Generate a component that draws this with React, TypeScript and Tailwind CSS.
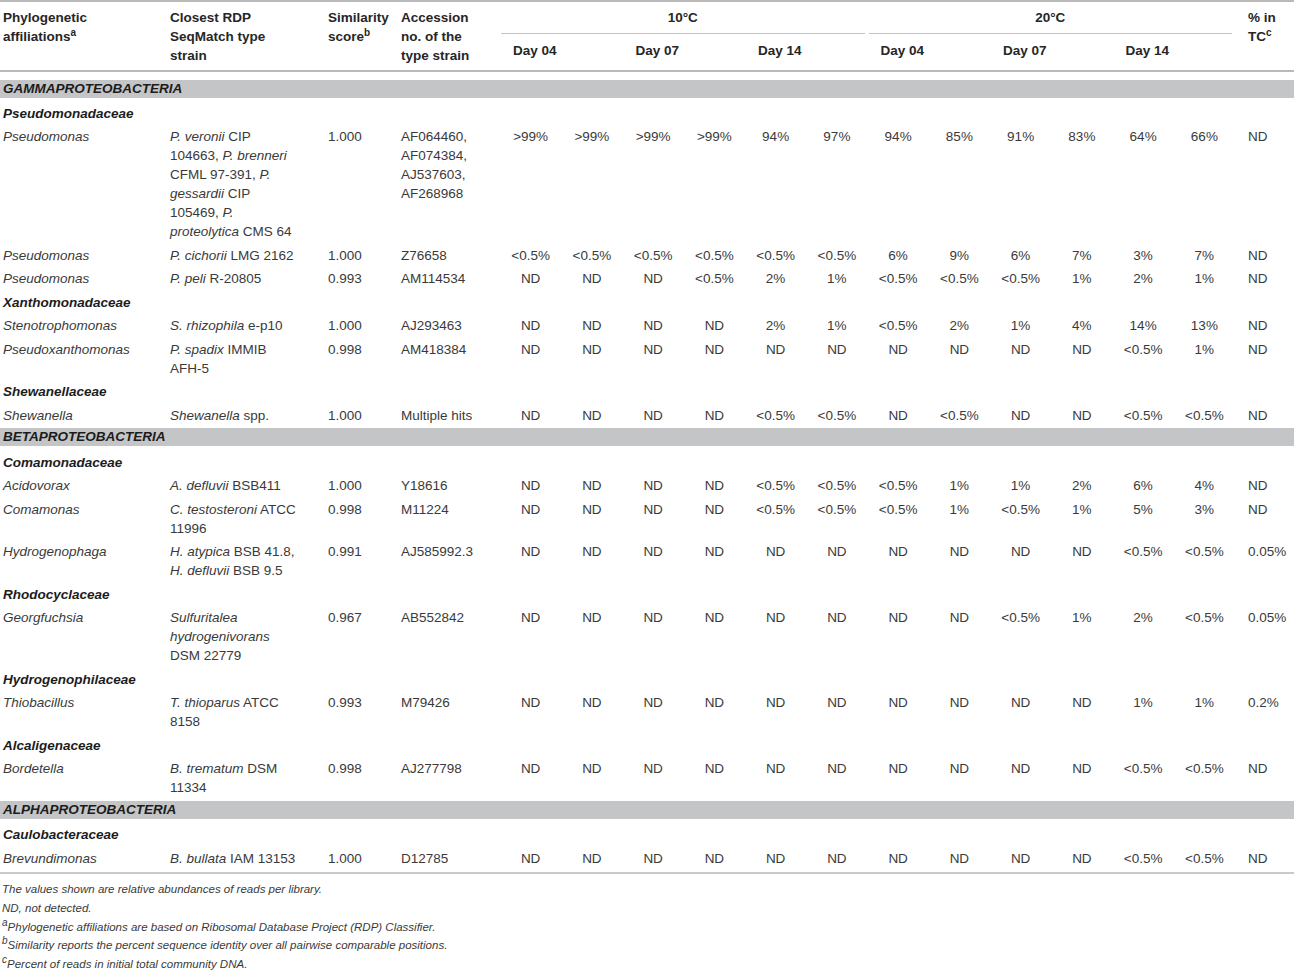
import type { ReactNode } from 'react';

const grid = 'grid grid-cols-[167px_158px_73px_102px_repeat(12,61.25px)_1fr]';

type Row = {
  genus: string;
  strain: ReactNode;
  score: string;
  acc: ReactNode;
  vals: string[];
  tc: string;
};

type Item =
  | { kind: 'band'; label: string; first?: boolean }
  | { kind: 'family'; label: string }
  | ({ kind: 'row' } & Row);

const ND6 = ['ND', 'ND', 'ND', 'ND', 'ND', 'ND'];

const items: Item[] = [
  { kind: 'band', label: 'GAMMAPROTEOBACTERIA', first: true },
  { kind: 'family', label: 'Pseudomonadaceae' },
  {
    kind: 'row',
    genus: 'Pseudomonas',
    strain: (
      <>
        <i>P. veronii</i> CIP
        <br />
        104663, <i>P. brenneri</i>
        <br />
        CFML 97-391, <i>P.</i>
        <br />
        <i>gessardii</i> CIP
        <br />
        105469, <i>P.</i>
        <br />
        <i>proteolytica</i> CMS 64
      </>
    ),
    score: '1.000',
    acc: (
      <>
        AF064460,
        <br />
        AF074384,
        <br />
        AJ537603,
        <br />
        AF268968
      </>
    ),
    vals: ['>99%', '>99%', '>99%', '>99%', '94%', '97%', '94%', '85%', '91%', '83%', '64%', '66%'],
    tc: 'ND',
  },
  {
    kind: 'row',
    genus: 'Pseudomonas',
    strain: (
      <>
        <i>P. cichorii</i> LMG 2162
      </>
    ),
    score: '1.000',
    acc: 'Z76658',
    vals: ['<0.5%', '<0.5%', '<0.5%', '<0.5%', '<0.5%', '<0.5%', '6%', '9%', '6%', '7%', '3%', '7%'],
    tc: 'ND',
  },
  {
    kind: 'row',
    genus: 'Pseudomonas',
    strain: (
      <>
        <i>P. peli</i> R-20805
      </>
    ),
    score: '0.993',
    acc: 'AM114534',
    vals: ['ND', 'ND', 'ND', '<0.5%', '2%', '1%', '<0.5%', '<0.5%', '<0.5%', '1%', '2%', '1%'],
    tc: 'ND',
  },
  { kind: 'family', label: 'Xanthomonadaceae' },
  {
    kind: 'row',
    genus: 'Stenotrophomonas',
    strain: (
      <>
        <i>S. rhizophila</i> e-p10
      </>
    ),
    score: '1.000',
    acc: 'AJ293463',
    vals: ['ND', 'ND', 'ND', 'ND', '2%', '1%', '<0.5%', '2%', '1%', '4%', '14%', '13%'],
    tc: 'ND',
  },
  {
    kind: 'row',
    genus: 'Pseudoxanthomonas',
    strain: (
      <>
        <i>P. spadix</i> IMMIB
        <br />
        AFH-5
      </>
    ),
    score: '0.998',
    acc: 'AM418384',
    vals: [...ND6, 'ND', 'ND', 'ND', 'ND', '<0.5%', '1%'],
    tc: 'ND',
  },
  { kind: 'family', label: 'Shewanellaceae' },
  {
    kind: 'row',
    genus: 'Shewanella',
    strain: (
      <>
        <i>Shewanella</i> spp.
      </>
    ),
    score: '1.000',
    acc: 'Multiple hits',
    vals: ['ND', 'ND', 'ND', 'ND', '<0.5%', '<0.5%', 'ND', '<0.5%', 'ND', 'ND', '<0.5%', '<0.5%'],
    tc: 'ND',
  },
  { kind: 'band', label: 'BETAPROTEOBACTERIA' },
  { kind: 'family', label: 'Comamonadaceae' },
  {
    kind: 'row',
    genus: 'Acidovorax',
    strain: (
      <>
        <i>A. defluvii</i> BSB411
      </>
    ),
    score: '1.000',
    acc: 'Y18616',
    vals: ['ND', 'ND', 'ND', 'ND', '<0.5%', '<0.5%', '<0.5%', '1%', '1%', '2%', '6%', '4%'],
    tc: 'ND',
  },
  {
    kind: 'row',
    genus: 'Comamonas',
    strain: (
      <>
        <i>C. testosteroni</i> ATCC
        <br />
        11996
      </>
    ),
    score: '0.998',
    acc: 'M11224',
    vals: ['ND', 'ND', 'ND', 'ND', '<0.5%', '<0.5%', '<0.5%', '1%', '<0.5%', '1%', '5%', '3%'],
    tc: 'ND',
  },
  {
    kind: 'row',
    genus: 'Hydrogenophaga',
    strain: (
      <>
        <i>H. atypica</i> BSB 41.8,
        <br />
        <i>H. defluvii</i> BSB 9.5
      </>
    ),
    score: '0.991',
    acc: 'AJ585992.3',
    vals: [...ND6, 'ND', 'ND', 'ND', 'ND', '<0.5%', '<0.5%'],
    tc: '0.05%',
  },
  { kind: 'family', label: 'Rhodocyclaceae' },
  {
    kind: 'row',
    genus: 'Georgfuchsia',
    strain: (
      <>
        <i>Sulfuritalea</i>
        <br />
        <i>hydrogenivorans</i>
        <br />
        DSM 22779
      </>
    ),
    score: '0.967',
    acc: 'AB552842',
    vals: [...ND6, 'ND', 'ND', '<0.5%', '1%', '2%', '<0.5%'],
    tc: '0.05%',
  },
  { kind: 'family', label: 'Hydrogenophilaceae' },
  {
    kind: 'row',
    genus: 'Thiobacillus',
    strain: (
      <>
        <i>T. thioparus</i> ATCC
        <br />
        8158
      </>
    ),
    score: '0.993',
    acc: 'M79426',
    vals: [...ND6, 'ND', 'ND', 'ND', 'ND', '1%', '1%'],
    tc: '0.2%',
  },
  { kind: 'family', label: 'Alcaligenaceae' },
  {
    kind: 'row',
    genus: 'Bordetella',
    strain: (
      <>
        <i>B. trematum</i> DSM
        <br />
        11334
      </>
    ),
    score: '0.998',
    acc: 'AJ277798',
    vals: [...ND6, 'ND', 'ND', 'ND', 'ND', '<0.5%', '<0.5%'],
    tc: 'ND',
  },
  { kind: 'band', label: 'ALPHAPROTEOBACTERIA' },
  { kind: 'family', label: 'Caulobacteraceae' },
  {
    kind: 'row',
    genus: 'Brevundimonas',
    strain: (
      <>
        <i>B. bullata</i> IAM 13153
      </>
    ),
    score: '1.000',
    acc: 'D12785',
    vals: [...ND6, 'ND', 'ND', 'ND', 'ND', '<0.5%', '<0.5%'],
    tc: 'ND',
  },
];

// superscript marks (a, b, c) in header and notes
const Sup = ({ children }: { children: ReactNode }) => (
  <span className="relative top-[-5px] text-[10px] leading-none">{children}</span>
);

const Header = () => (
  <div className={`${grid} border-t-2 border-b-2 border-[#b9b9b9] pt-[5.5px] font-bold text-[#262626]`}>
    <div className="row-span-2 pl-[3px]">
      Phylogenetic
      <br />
      affiliations<Sup>a</Sup>
    </div>
    <div className="row-span-2 pl-[3px]">
      Closest RDP
      <br />
      SeqMatch type
      <br />
      strain
    </div>
    <div className="row-span-2 pl-[3px]">
      Similarity
      <br />
      score<Sup>b</Sup>
    </div>
    <div className="row-span-2 pl-[3px]">
      Accession
      <br />
      no. of the
      <br />
      type strain
    </div>
    <div className="col-span-6 ml-[1px] mr-[3px] border-b-[1.5px] border-[#c4c4c4] pb-[6px] text-center">10°C</div>
    <div className="col-span-6 ml-[1px] mr-[3px] border-b-[1.5px] border-[#c4c4c4] pb-[6px] text-center">20°C</div>
    <div className="row-span-2 pl-[13px]">
      % in
      <br />
      TC<Sup>c</Sup>
    </div>
    {['Day 04', 'Day 07', 'Day 14', 'Day 04', 'Day 07', 'Day 14'].map((d, i) => (
      <div key={i} className="col-span-2 pl-[13px] pt-[7.5px] pb-[9.5px]">
        {d}
      </div>
    ))}
  </div>
);

export default function App() {
  return (
    <div className="min-h-screen w-[1294px] bg-white font-['Liberation_Sans',Arial,sans-serif] text-[13.5px] leading-[19px] text-[#3a3a3a]">
      <Header />
      {items.map((it, i) => {
        if (it.kind === 'band') {
          return (
            <div key={i} className={it.first ? 'pt-[8px] pb-[4px]' : 'pt-[1.25px] pb-[4.25px]'}>
              <div className="h-[18px] bg-[#c4c5c7] pl-[3px] text-[13.5px] leading-[18px] font-bold italic text-[#1c1c1c]">
                {it.label}
              </div>
            </div>
          );
        }
        if (it.kind === 'family') {
          return (
            <div key={i} className="py-[2.25px] pl-[3px] font-bold italic text-[#1c1c1c]">
              {it.label}
            </div>
          );
        }
        return (
          <div key={i} className={`${grid} py-[2.25px]`}>
            <div className="pl-[3px] italic">{it.genus}</div>
            <div className="pl-[3px] whitespace-nowrap">{it.strain}</div>
            <div className="pl-[3px]">{it.score}</div>
            <div className="pl-[3px] whitespace-nowrap">{it.acc}</div>
            {it.vals.map((v, j) => (
              <div key={j} className="text-center">
                {v}
              </div>
            ))}
            <div className="pl-[13px]">{it.tc}</div>
          </div>
        );
      })}
      <div className="mt-[2px] border-t-2 border-[#c9c9c9] pt-[6px] pl-[2px] text-[11.5px] leading-[18.75px] italic text-[#3a3a3a]">
        <p>The values shown are relative abundances of reads per library.</p>
        <p>ND, not detected.</p>
        <p>
          <Sup>a</Sup>Phylogenetic affiliations are based on Ribosomal Database Project (RDP) Classifier.
        </p>
        <p>
          <Sup>b</Sup>Similarity reports the percent sequence identity over all pairwise comparable positions.
        </p>
        <p>
          <Sup>c</Sup>Percent of reads in initial total community DNA.
        </p>
      </div>
    </div>
  );
}
